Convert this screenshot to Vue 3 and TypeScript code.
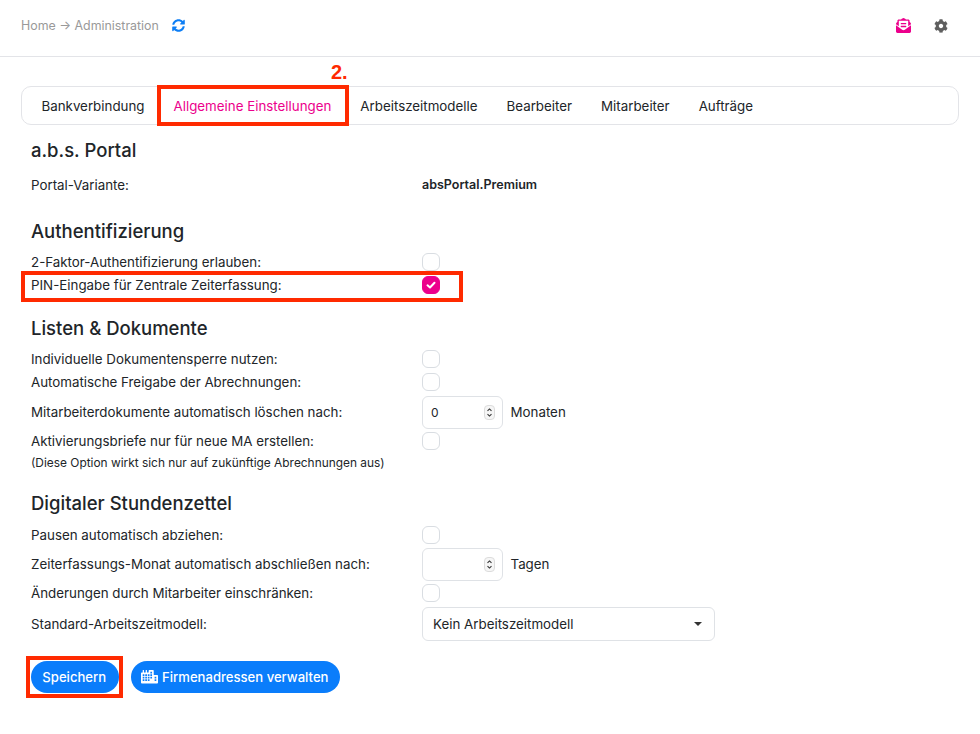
<script setup lang="ts">
const tabs: string[] = ['Bankverbindung', 'Allgemeine Einstellungen', 'Arbeitszeitmodelle', 'Bearbeiter', 'Mitarbeiter', 'Aufträge']
const cityPath = 'M616 192H480V24c0-13.260-10.740-24-24-24H312c-13.260 0-24 10.740-24 24v72h-64V16c0-8.840-7.160-16-16-16h-16c-8.840 0-16 7.160-16 16v80h-64V16c0-8.840-7.160-16-16-16H80c-8.840 0-16 7.160-16 16v80H24c-13.260 0-24 10.740-24 24v360c0 17.670 14.330 32 32 32h576c17.670 0 32-14.330 32-32V216c0-13.260-10.750-24-24-24Z'
  + ['64,160', '64,256', '64,352', '160,160', '160,256', '160,352', '256,160', '256,256', '256,352', '352,64', '352,160', '352,256', '512,256', '512,352']
    .map((p) => { const [x, y] = p.split(','); return `M${x} ${y}h64v64h-64Z` })
    .join('')
</script>

<template>
  <div class="page">
    <header class="top">
      <div class="crumbs">
        <span>Home → Administration</span>
        <svg class="sync" viewBox="0 0 512 512"><path d="M370.72 133.28C339.458 104.008 298.888 87.962 255.848 88c-77.458.068-144.328 53.178-162.791 126.85-1.344 5.363-6.122 9.15-11.651 9.15H24.103c-7.498 0-13.194-6.807-11.807-14.176C33.933 94.924 134.813 8 256 8c66.448 0 126.791 26.136 171.315 68.685L463.03 40.97C478.149 25.851 504 36.559 504 57.941V192c0 13.255-10.745 24-24 24H345.941c-21.382 0-32.09-25.851-16.971-40.971l41.75-41.749zM32 296h134.059c21.382 0 32.09 25.851 16.971 40.971l-41.75 41.75c31.262 29.273 71.835 45.319 114.876 45.28 77.418-.07 144.315-53.144 162.787-126.849 1.344-5.363 6.122-9.15 11.651-9.15h57.304c7.498 0 13.194 6.807 11.807 14.176C478.067 417.076 377.187 504 256 504c-66.448 0-126.791-26.136-171.315-68.685L48.97 471.03C33.851 486.149 8 475.441 8 454.059V320c0-13.255 10.745-24 24-24z"/></svg>
      </div>
      <div class="tools">
        <svg class="mail" viewBox="0 0 512 512"><path d="M176 216h160c8.840 0 16-7.160 16-16v-16c0-8.840-7.160-16-16-16H176c-8.840 0-16 7.160-16 16v16c0 8.840 7.160 16 16 16zm-16 80c0 8.840 7.160 16 16 16h160c8.840 0 16-7.160 16-16v-16c0-8.840-7.160-16-16-16H176c-8.840 0-16 7.160-16 16v16zm96 121.130c-16.420 0-32.840-5.070-46.860-15.190L0 250.860V464c0 26.510 21.490 48 48 48h416c26.510 0 48-21.490 48-48V250.860L302.860 401.940c-14.020 10.120-30.440 15.190-46.860 15.190zm237.610-254.180c-8.850-6.940-17.240-13.470-29.610-22.810V96c0-26.510-21.490-48-48-48h-77.550c-3.040-2.200-5.870-4.260-9.040-6.560C312.600 29.170 279.200-.35 256 0c-23.200-.35-56.590 29.170-73.410 41.440-3.170 2.300-6 4.360-9.040 6.560H96c-26.510 0-48 21.490-48 48v44.140c-12.370 9.330-20.760 15.870-29.610 22.810A47.995 47.995 0 0 0 0 200.720v10.650l96 69.350V96h320v184.720l96-69.350v-10.650c0-14.740-6.780-28.670-18.390-37.770z"/></svg>
        <svg class="cog" viewBox="0 0 512 512"><path d="M487.4 315.7l-42.6-24.6c4.3-23.2 4.3-47 0-70.2l42.6-24.6c4.9-2.8 7.1-8.6 5.500-14-11.100-35.600-30-67.800-54.700-94.600-3.800-4.100-10-5.100-14.800-2.300L380.800 110c-17.900-15.400-38.500-27.300-60.800-35.100V25.800c0-5.600-3.900-10.500-9.400-11.700-36.700-8.200-74.300-7.800-109.200 0-5.500 1.200-9.400 6.100-9.400 11.700V75c-22.200 7.900-42.800 19.800-60.800 35.100L88.700 85.500c-4.900-2.800-11-1.900-14.800 2.300-24.700 26.700-43.600 58.900-54.700 94.600-1.700 5.400.6 11.200 5.500 14L67.300 221c-4.300 23.200-4.300 47 0 70.200l-42.600 24.600c-4.900 2.800-7.100 8.600-5.500 14 11.100 35.600 30 67.800 54.700 94.600 3.800 4.100 10 5.100 14.800 2.300l42.600-24.600c17.900 15.400 38.500 27.300 60.800 35.100v49.200c0 5.600 3.900 10.500 9.400 11.700 36.700 8.200 74.300 7.800 109.200 0 5.500-1.200 9.400-6.100 9.400-11.700v-49.200c22.200-7.900 42.800-19.800 60.800-35.100l42.600 24.600c4.900 2.800 11 1.900 14.800-2.300 24.700-26.700 43.600-58.900 54.700-94.600 1.500-5.500-.7-11.300-5.600-14.100zM256 336c-44.100 0-80-35.900-80-80s35.900-80 80-80 80 35.900 80 80-35.900 80-80 80z"/></svg>
      </div>
    </header>

    <main class="main">
      <nav class="tabs">
        <span v-for="(t, i) in tabs" :key="t" class="tab" :class="{ active: i === 1 }">{{ t }}</span>
      </nav>

      <section class="form">
        <h2 class="h-first">a.b.s. Portal</h2>
        <div class="row r-variant"><label>Portal-Variante:</label><strong>absPortal.Premium</strong></div>

        <h2 class="h-auth">Authentifizierung</h2>
        <div class="row"><label>2-Faktor-Authentifizierung erlauben:</label><i class="check"></i></div>
        <div class="row"><label>PIN-Eingabe für Zentrale Zeiterfassung:</label>
          <i class="check on"><svg viewBox="0 0 12 12"><path d="M2.500 6.300 5 8.500l4.500-4.700" /></svg></i>
        </div>

        <h2 class="h-list">Listen &amp; Dokumente</h2>
        <div class="row"><label>Individuelle Dokumentensperre nutzen:</label><i class="check"></i></div>
        <div class="row"><label>Automatische Freigabe der Abrechnungen:</label><i class="check"></i></div>
        <div class="row r-num r-num1">
          <label>Mitarbeiterdokumente automatisch löschen nach:</label>
          <div class="num"><span>0</span><b class="spin"><svg viewBox="0 0 10 14"><path d="M2.800 5.200 5 3l2.200 2.200M2.800 8.800 5 11l2.200-2.200" /></svg></b></div>
          <span class="unit">Monaten</span>
        </div>
        <div class="row r-after"><label>Aktivierungsbriefe nur für neue MA erstellen:</label><i class="check"></i></div>
        <p class="note">(Diese Option wirkt sich nur auf zukünftige Abrechnungen aus)</p>

        <h2 class="h-dig">Digitaler Stundenzettel</h2>
        <div class="row"><label>Pausen automatisch abziehen:</label><i class="check"></i></div>
        <div class="row r-num r-num2">
          <label>Zeiterfassungs-Monat automatisch abschließen nach:</label>
          <div class="num"><span></span><b class="spin"><svg viewBox="0 0 10 14"><path d="M2.800 5.200 5 3l2.200 2.200M2.800 8.800 5 11l2.200-2.200" /></svg></b></div>
          <span class="unit">Tagen</span>
        </div>
        <div class="row"><label>Änderungen durch Mitarbeiter einschränken:</label><i class="check"></i></div>
        <div class="row r-sel">
          <label>Standard-Arbeitszeitmodell:</label>
          <div class="select"><span>Kein Arbeitszeitmodell</span><b class="caret"></b></div>
        </div>

        <div class="actions">
          <button class="btn btn-save" type="button">Speichern</button>
          <button class="btn btn-addr" type="button">
            <svg class="city" viewBox="0 0 640 512"><path fill-rule="evenodd" :d="cityPath"/></svg>
            Firmenadressen verwalten
          </button>
        </div>
      </section>
    </main>

    <span class="mark num2">2.</span>
    <span class="mark box b-tab"></span>
    <span class="mark box b-pin"></span>
    <span class="mark box b-save"></span>
  </div>
</template>

<style>
html, body { margin: 0; background: #fff; }
</style>

<style scoped>
.page {
  position: relative;
  width: 980px;
  height: 734px;
  overflow: hidden;
  background: #fff;
  color: #212529;
  font-family: Inter, "Liberation Sans", sans-serif;
  font-size: 13.330px;
}
.top {
  box-sizing: border-box;
  height: 57px;
  border-bottom: 1px solid #e3e4e8;
  display: flex;
  align-items: center;
  justify-content: space-between;
  padding: 0 32px 5px 21px;
}
.crumbs { display: flex; align-items: center; gap: 13px; color: #999; font-size: 12.400px; }
.sync { width: 13px; height: 13px; fill: #0d7ef5; }
.tools { display: flex; align-items: center; gap: 23px; }
.mail { width: 15px; height: 15px; fill: #ec008c; }
.cog { width: 14px; height: 14px; fill: #5f5f5f; }

.main { padding: 29px 21px 0; }
.tabs {
  box-sizing: border-box;
  height: 39px;
  border: 1px solid #e3e4e8;
  border-radius: 10px;
  display: flex;
  align-items: center;
  padding-left: 5px;
}
.tab { padding: 0 14.500px; white-space: nowrap; }
.tab.active { color: #ec008c; }

.form { padding-left: 10px; }
h2 { margin: 0; font-size: 18.500px; line-height: 24px; font-weight: 500; }
.h-first { margin-top: 13px; }
.row { display: flex; align-items: center; height: 23px; }
.row label { width: 391px; flex: none; }
.row strong { font-size: 12.500px; font-weight: 600; }
.r-variant { margin-top: 11px; }
.h-auth { margin-top: 23px; }
.h-auth + .row { margin-top: 7.500px; }
.h-list { margin-top: 19.500px; }
.h-list + .row { margin-top: 7.500px; }
.r-num { height: 33px; }
.r-num1 { margin-top: 2px; }
.r-after { margin-top: 1px; }
.note { margin: 2px 0 0; font-size: 11.900px; line-height: 16px; }
.h-dig { margin-top: 20.500px; }
.h-dig + .row { margin-top: 8.500px; }
.r-num2 { margin-top: 1px; }
.r-num2 + .row { margin-top: 1px; }
.r-sel { height: 34px; margin-top: 2.500px; }

.check {
  box-sizing: border-box;
  display: block;
  width: 18px;
  height: 18px;
  border: 1.500px solid #d9dde2;
  border-radius: 6px;
  background: #fff;
}
.check.on { background: #ec008c; border-color: #ec008c; display: flex; align-items: center; justify-content: center; }
.check.on svg { width: 12px; height: 12px; fill: none; stroke: #fff; stroke-width: 2; stroke-linecap: round; stroke-linejoin: round; }

.num, .select {
  box-sizing: border-box;
  border: 1px solid #dfe2e6;
  border-radius: 6px;
  background: #fff;
  display: flex;
  align-items: center;
  justify-content: space-between;
}
.num { width: 81px; height: 33px; padding: 0 4px 0 8px; font-size: 12px; }
.select { width: 293px; height: 34px; padding: 0 12px 0 10px; }
.select span { position: relative; top: -0.5px; }
.spin { box-sizing: border-box; display: block; width: 11px; height: 15px; border: 1px solid #dcdcdc; border-radius: 4px; margin-right: 3px; background: #f6f6f6; }
.spin svg { display: block; width: 9px; height: 13px; fill: none; stroke: #333; stroke-width: 1.200; }
.unit { margin-left: 7.500px; }
.caret { width: 0; height: 0; border-left: 4.500px solid transparent; border-right: 4.500px solid transparent; border-top: 4.500px solid #333; }

.actions { display: flex; gap: 12.500px; margin-top: 20px; }
.btn {
  box-sizing: border-box;
  height: 32px;
  border: 0;
  border-radius: 16px;
  background: #0a7dfb;
  color: #fff;
  font: 500 13.100px Inter, "Liberation Sans", sans-serif;
  display: flex;
  align-items: center;
  white-space: nowrap;
}
.btn-save { width: 87.500px; justify-content: center; padding: 0 1px 0 0; }
.btn-addr { width: 208.500px; justify-content: center; padding: 0 1px 0 0; gap: 4px; }
.city { width: 17px; height: 13.600px; fill: #fff; }

.mark { position: absolute; }
.num2 { left: 331px; top: 61px; color: #ff2a00; font: 700 20px/23px "Liberation Sans", Arial, sans-serif; }
.box { box-sizing: border-box; border: 4px solid #ff2a00; }
.b-tab { left: 157px; top: 85px; width: 192px; height: 41px; }
.b-pin { left: 21px; top: 271px; width: 442px; height: 31px; }
.b-save { left: 26px; top: 656px; width: 97px; height: 42px; }
</style>
